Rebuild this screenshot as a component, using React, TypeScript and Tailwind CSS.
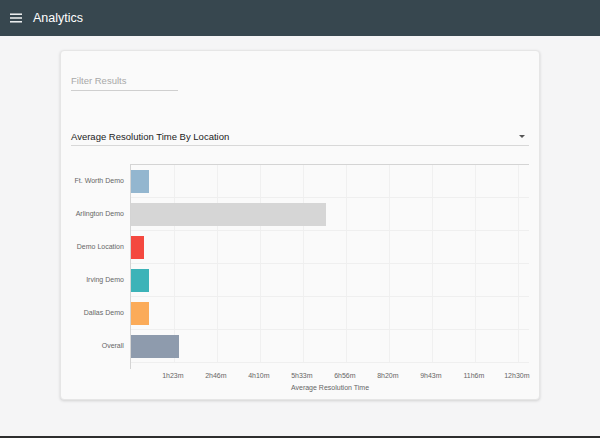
import React from 'react';

interface Row {
  label: string;
  width: number;
  color: string;
}

const rows: Row[] = [
  { label: 'Ft. Worth Demo', width: 18, color: 'bg-[#93b6cf]' },
  { label: 'Arlington Demo', width: 195, color: 'bg-[#d6d6d6]' },
  { label: 'Demo Location', width: 13, color: 'bg-[#f4483f]' },
  { label: 'Irving Demo', width: 18, color: 'bg-[#3cb3b8]' },
  { label: 'Dallas Demo', width: 18, color: 'bg-[#fbab59]' },
  { label: 'Overall', width: 48, color: 'bg-[#8e9bad]' },
];

const ticks = ['1h23m', '2h46m', '4h10m', '5h33m', '6h56m', '8h20m', '9h43m', '11h6m', '12h30m'];

function Chart() {
  return (
    <div className="mt-[18px] flex flex-col">
      <div className="flex">
        {/* y labels */}
        <div className="w-[53px] flex flex-col pt-px">
          {rows.map((r) => (
            <div key={r.label} className="h-[33px] flex items-center justify-end text-[7px] text-[#666] whitespace-nowrap">
              {r.label}
            </div>
          ))}
        </div>
        {/* plot */}
        <div className="relative ml-[6px] w-[400px] border-t border-l border-[#d4d4d4] pb-[6px]">
          {ticks.map((t, i) => (
            <div
              key={t}
              className="absolute top-0 bottom-[6px] border-l border-[#f0f0f0]"
              style={{ left: 43 * (i + 1) }}
            />
          ))}
          {rows.map((r) => (
            <div key={r.label} className="relative h-[33px] flex items-center border-b border-[#efefef]">
              <div className={`h-[23px] ${r.color}`} style={{ width: r.width }} />
            </div>
          ))}
        </div>
      </div>
      <div className="flex">
        <div className="w-[59px]" />
        <div className="relative w-[400px] h-[14px]">
          {ticks.map((t, i) => (
            <span
              key={t}
              className="absolute top-[2px] -translate-x-1/2 text-[7px] text-[#666]"
              style={{ left: 43 * (i + 1) }}
            >
              {t}
            </span>
          ))}
        </div>
      </div>
      <div className="pl-[59px] w-[459px] text-center text-[7px] text-[#666]">Average Resolution Time</div>
    </div>
  );
}

export default function App() {
  return (
    <div className="h-[438px] flex flex-col bg-[#f5f5f6] font-['Liberation_Sans',Arial,sans-serif] border-b-2 border-[#2e2e2e]">
      <header className="h-9 bg-[#37474f] flex items-center px-[10px] gap-[11px] shrink-0">
        <svg width="12" height="10" viewBox="0 0 12 10" className="text-white">
          <rect x="0" y="0.5" width="12" height="1.4" fill="currentColor" />
          <rect x="0" y="4.3" width="12" height="1.4" fill="currentColor" />
          <rect x="0" y="8.1" width="12" height="1.4" fill="currentColor" />
        </svg>
        <span className="text-white text-[12.5px]">Analytics</span>
      </header>
      <main className="flex-1">
        <div className="mx-auto mt-[14px] w-[480px] h-[350px] bg-[#fafafa] rounded-sm border border-[#e6e6e6] shadow-[0_1px_3px_rgba(0,0,0,0.15)] pl-[10px] pr-[10px] pt-[25px]">
          <div className="w-[107px] border-b border-[#cfcfcf] pb-[4px] leading-none text-[9.5px] text-[#a8a8a8]">Filter Results</div>
          <div className="mt-[41px] flex items-center justify-between border-b border-[#d8d8d8] pb-[4px] leading-none">
            <span className="text-[9.5px] text-[#222]">Average Resolution Time By Location</span>
            <span className="mr-[4px] w-0 h-0 border-l-[3px] border-r-[3px] border-t-[3px] border-l-transparent border-r-transparent border-t-[#555]" />
          </div>
          <Chart />
        </div>
      </main>
    </div>
  );
}
